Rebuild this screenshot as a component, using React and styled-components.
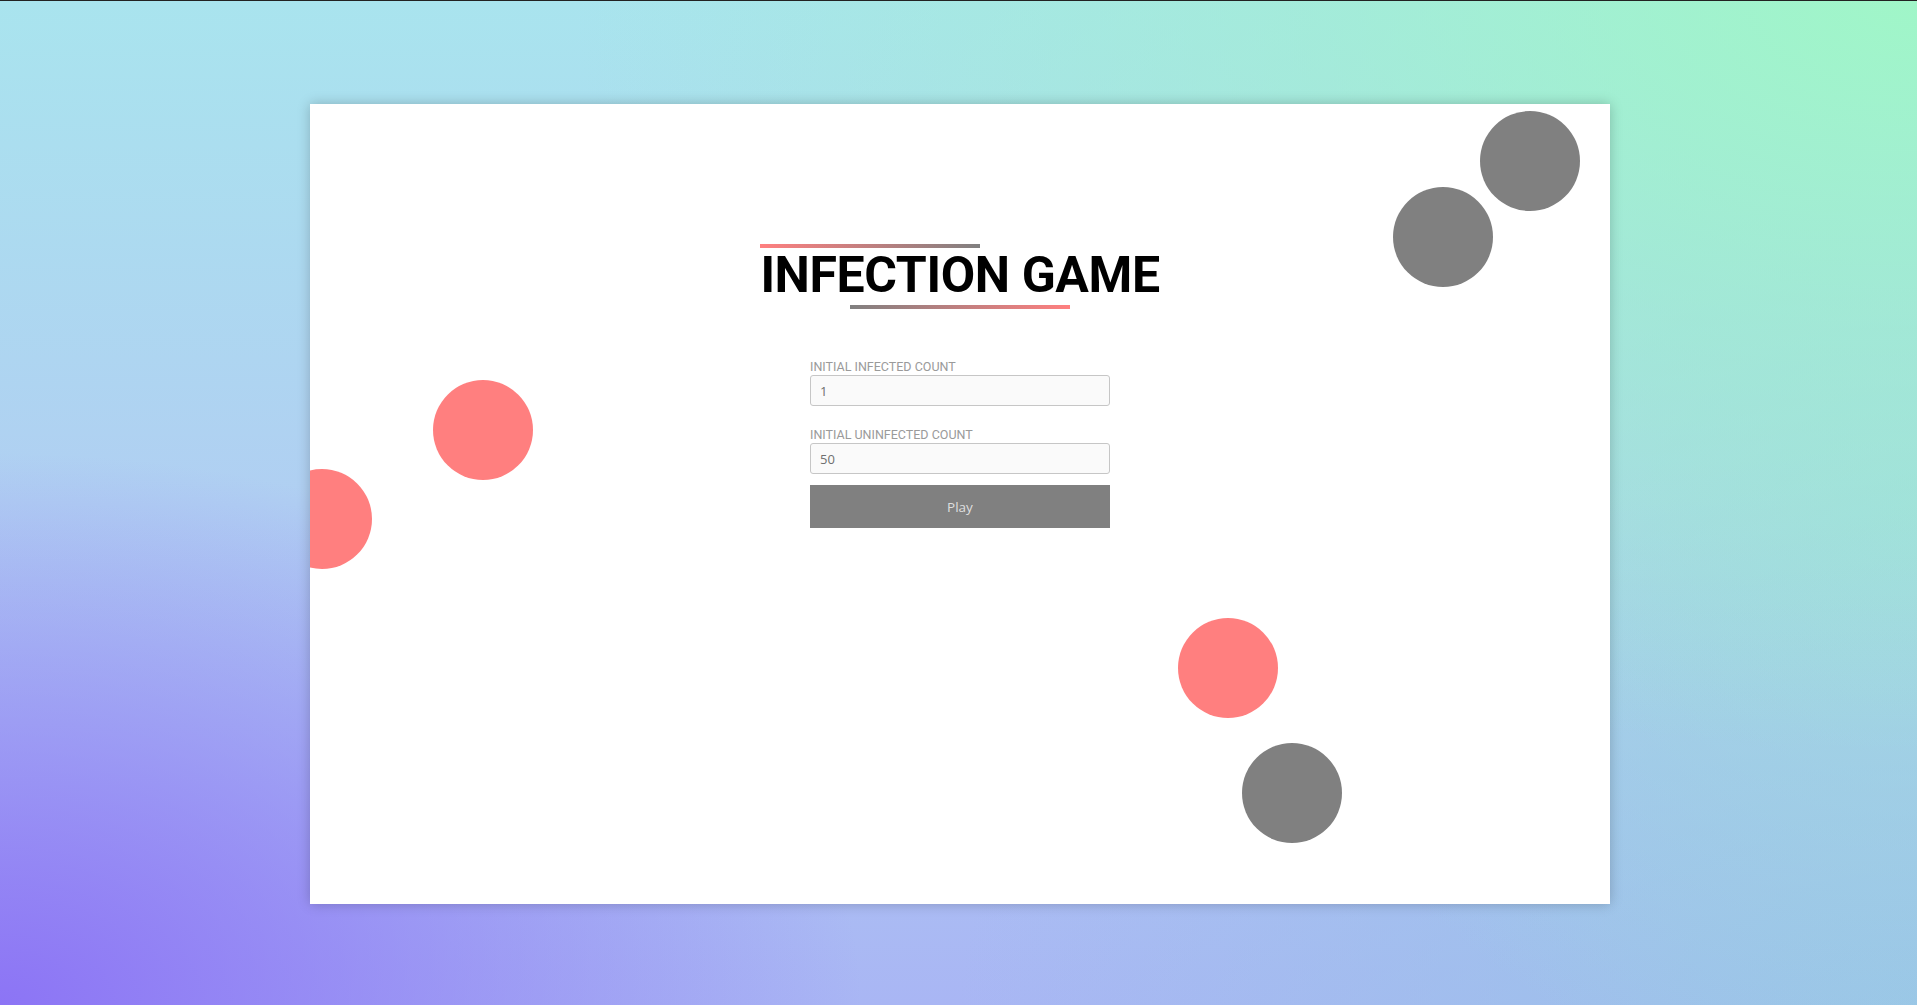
import React from 'react'
import styled, { createGlobalStyle } from 'styled-components'

const GlobalStyle = createGlobalStyle`
  * {
    box-sizing: border-box;
  }
  body {
    margin: 0;
    font-family: 'Open Sans', 'Liberation Sans', sans-serif;
  }
`

const Page = styled.div`
  height: 100vh;
  border-top: 1px solid #222;
  padding: 2px 0 0 3px;
  display: flex;
  align-items: center;
  justify-content: center;
  background:
    radial-gradient(ellipse 45% 55% at 0% 100%, rgba(140, 116, 245, 1) 0%, rgba(140, 116, 245, 0) 100%),
    radial-gradient(ellipse 70% 75% at 100% 0%, rgba(160, 246, 200, 1) 0%, rgba(160, 240, 205, 0.6) 45%, rgba(160, 240, 205, 0) 100%),
    radial-gradient(ellipse 35% 60% at 100% 50%, rgba(158, 222, 220, 0.8) 0%, rgba(158, 222, 220, 0) 100%),
    radial-gradient(ellipse 50% 55% at 100% 100%, rgba(154, 196, 232, 1) 0%, rgba(154, 196, 232, 0) 100%),
    linear-gradient(to bottom, #a9e4ee 0%, #b0cff2 50%, #a9b6f4 100%);
`

const Card = styled.div`
  position: relative;
  width: 1300px;
  height: 800px;
  background: #fff;
  overflow: hidden;
  box-shadow: 0 0 12px rgba(0, 0, 0, 0.22);
  display: flex;
  flex-direction: column;
  align-items: center;
  padding-top: 140px;
`

const Ball = styled.div`
  position: absolute;
  width: 100px;
  height: 100px;
  border-radius: 50%;
  background: ${p => (p.infected ? '#ff7f7f' : '#808080')};
`

const Heading = styled.div`
  display: flex;
  flex-direction: column;
  width: 400px;
`

const Line = styled.div`
  width: 220px;
  height: 4px;
  background: linear-gradient(to right, ${p => (p.flip ? '#808080, #ff7f7f' : '#ff7f7f, #808080')});
  align-self: ${p => (p.flip ? 'center' : 'flex-start')};
`

const Title = styled.h1`
  margin: 2px 0 5px;
  font-family: Roboto, 'Liberation Sans', sans-serif;
  font-weight: 700;
  font-size: 50px;
  line-height: 50px;
  letter-spacing: -0.4px;
  color: #000;
  text-align: center;
  white-space: nowrap;
`

const Form = styled.form`
  width: 300px;
  margin-top: 50px;
  display: flex;
  flex-direction: column;
`

const Label = styled.label`
  display: block;
  font-family: Roboto, 'Liberation Sans', sans-serif;
  font-size: 12.5px;
  line-height: 15px;
  color: #9a9a9a;
  text-transform: uppercase;
  margin-top: ${p => (p.first ? '0' : '21px')};
`

const Input = styled.input`
  display: block;
  width: 100%;
  height: 31px;
  margin-top: 1px;
  padding: 0 9px;
  border: 1px solid #c6c6c6;
  border-radius: 3px;
  background: #fafafa;
  font-family: 'Open Sans', sans-serif;
  font-size: 13px;
  color: #6f6f6f;
  outline: none;
`

const Button = styled.button`
  margin-top: 11px;
  height: 43px;
  border: none;
  background: #808080;
  color: #dedede;
  font-family: 'Open Sans', sans-serif;
  font-size: 13.5px;
  cursor: pointer;
`

const balls = [
  { x: 1170, y: 7, infected: false },
  { x: 1083, y: 83, infected: false },
  { x: 123, y: 276, infected: true },
  { x: -38, y: 365, infected: true },
  { x: 868, y: 514, infected: true },
  { x: 932, y: 639, infected: false }
]

export default function App() {
  return (
    <>
      <GlobalStyle />
      <Page>
        <Card>
          {balls.map((b, i) => (
            <Ball key={i} infected={b.infected} style={{ left: b.x, top: b.y }} />
          ))}
          <Heading>
            <Line />
            <Title>INFECTION GAME</Title>
            <Line flip />
          </Heading>
          <Form onSubmit={e => e.preventDefault()}>
            <Label first>Initial infected count</Label>
            <Input defaultValue='1' />
            <Label>Initial uninfected count</Label>
            <Input defaultValue='50' />
            <Button type='submit'>Play</Button>
          </Form>
        </Card>
      </Page>
    </>
  )
}
